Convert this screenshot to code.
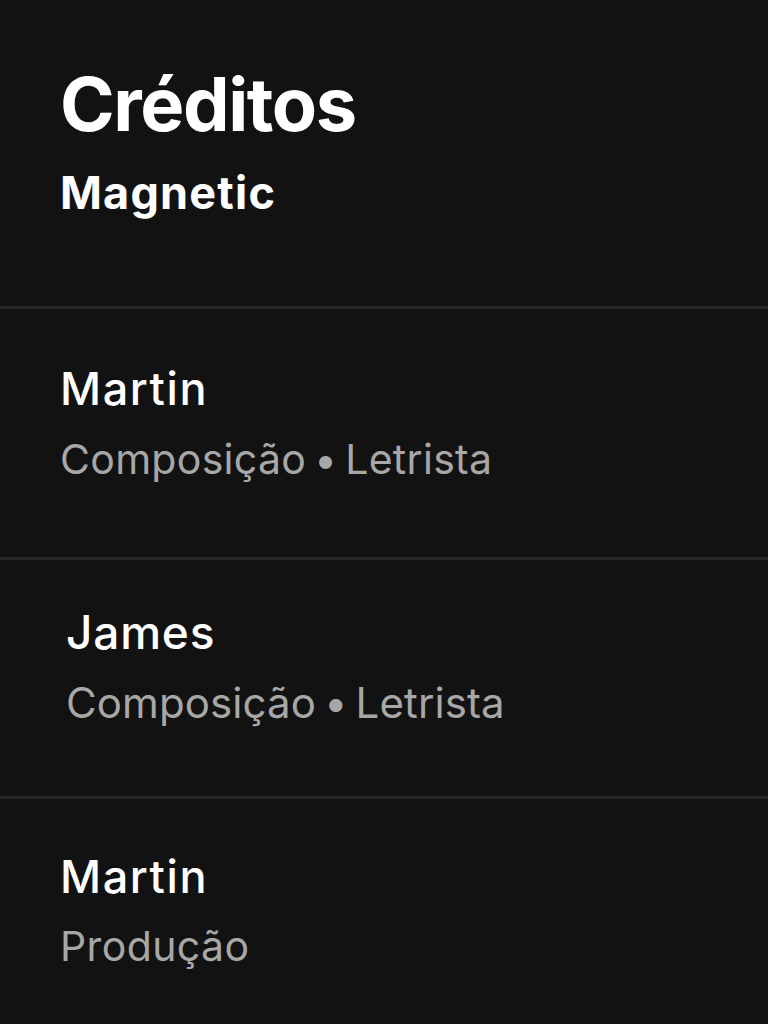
import React from "react";

const font = { fontFamily: "Inter, 'Noto Sans', sans-serif" };

function Divider() {
  return <div className="h-[3px] w-full bg-[#262626]" />;
}

export default function App() {
  return (
    <div className="w-[768px] h-[1024px] overflow-hidden bg-[#121212] text-white [font-variant-ligatures:none]" style={font}>
      <div className="h-[306px] px-[60px] pt-[66px]">
        <h1 className="text-[74px] font-bold leading-[76px] tracking-[-1.4px]">Créditos</h1>
        <h2 className="mt-[28px] text-[45px] font-bold leading-[46px] tracking-[1.2px]">Magnetic</h2>
      </div>
      <Divider />
      <div className="h-[248px] px-[60px] pt-[57px]">
        <div className="text-[45px] leading-[46px] font-medium tracking-[1.6px]">Martin</div>
        <div className="mt-[27px] text-[41px] leading-[41px] text-[#a7a7a7] tracking-[0.3px] [word-spacing:-4px]">Composição • Letrista</div>
      </div>
      <Divider />
      <div className="h-[236px] pl-[66px] pt-[49px]">
        <div className="text-[46px] leading-[47px] font-medium tracking-[0.8px]">James</div>
        <div className="mt-[26px] text-[42px] leading-[42px] text-[#a7a7a7] tracking-[0.1px] [word-spacing:-4px]">Composição • Letrista</div>
      </div>
      <Divider />
      <div className="px-[60px] pt-[55px]">
        <div className="text-[45px] leading-[46px] font-medium tracking-[1.6px]">Martin</div>
        <div className="mt-[26px] text-[41px] leading-[41px] text-[#a7a7a7] tracking-[0.4px]">Produção</div>
      </div>
    </div>
  );
}
